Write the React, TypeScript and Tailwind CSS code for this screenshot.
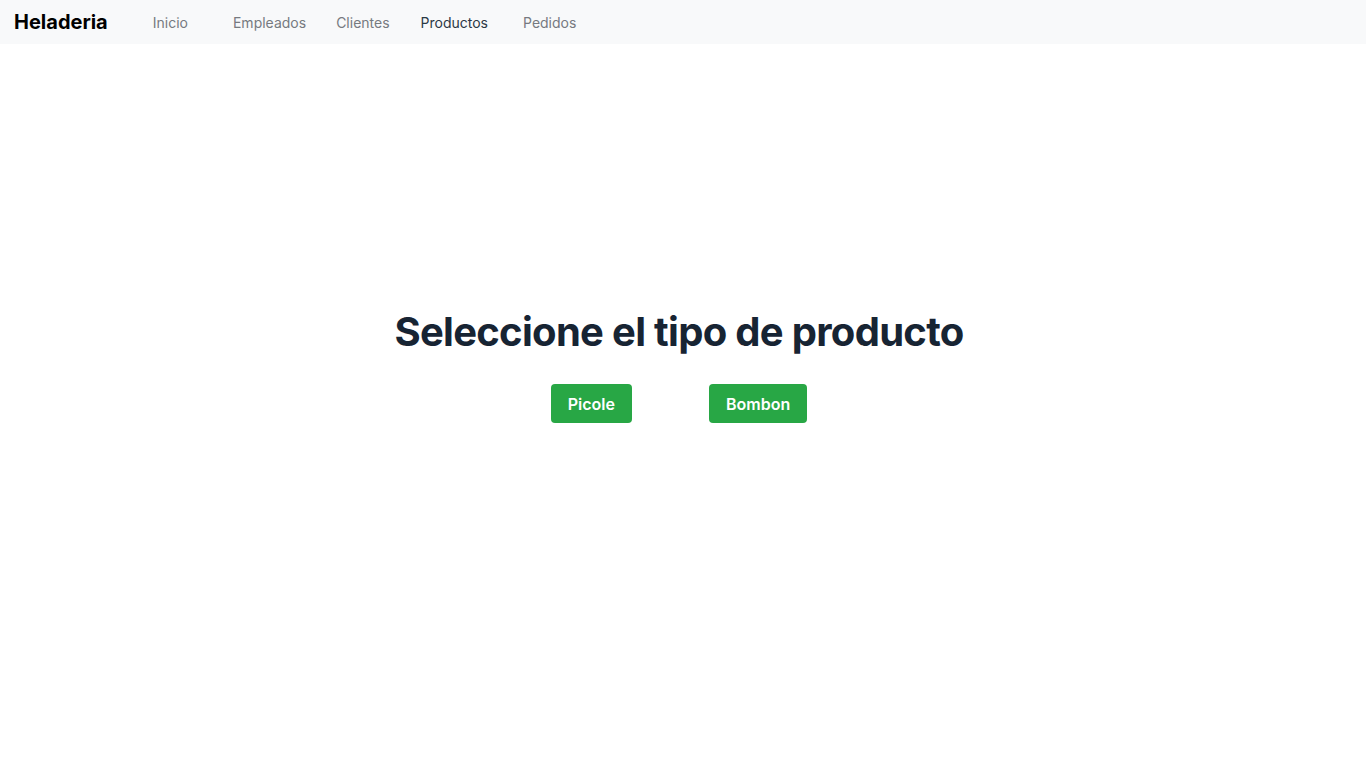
export default function App() {
  const links = [
    { label: "Inicio", active: false, cls: "ml-[45px]" },
    { label: "Empleados", active: false, cls: "ml-[45px]" },
    { label: "Clientes", active: false, cls: "ml-[30px]" },
    { label: "Productos", active: true, cls: "ml-[31px]" },
    { label: "Pedidos", active: false, cls: "ml-[35px]" },
  ];

  return (
    <div className="min-h-screen bg-white font-['Inter',sans-serif]">
      <nav className="flex h-[44px] items-center bg-[#f8f9fa] px-[14px]">
        <span className="text-[20px] font-bold text-black">Heladeria</span>
        {links.map((l) => (
          <a
            key={l.label}
            href="#"
            className={`${l.cls} pt-[1px] text-[14px] ${l.active ? "text-[#2c3845]" : "text-[#767a80]"}`}
          >
            {l.label}
          </a>
        ))}
      </nav>

      <main className="flex flex-col items-center pr-[8px] pt-[265px]">
        <h1 className="text-[40px] font-bold leading-[46px] tracking-[-0.7px] text-[#172433]">
          Seleccione el tipo de producto
        </h1>
        <div className="mt-[29px] flex gap-[77px]">
          <button
            type="button"
            className="h-[39px] rounded-[4px] bg-[#28a745] px-[17px] text-[16px] font-semibold text-white"
          >
            Picole
          </button>
          <button
            type="button"
            className="h-[39px] rounded-[4px] bg-[#28a745] px-[17px] text-[16px] font-semibold text-white"
          >
            Bombon
          </button>
        </div>
      </main>
    </div>
  );
}
